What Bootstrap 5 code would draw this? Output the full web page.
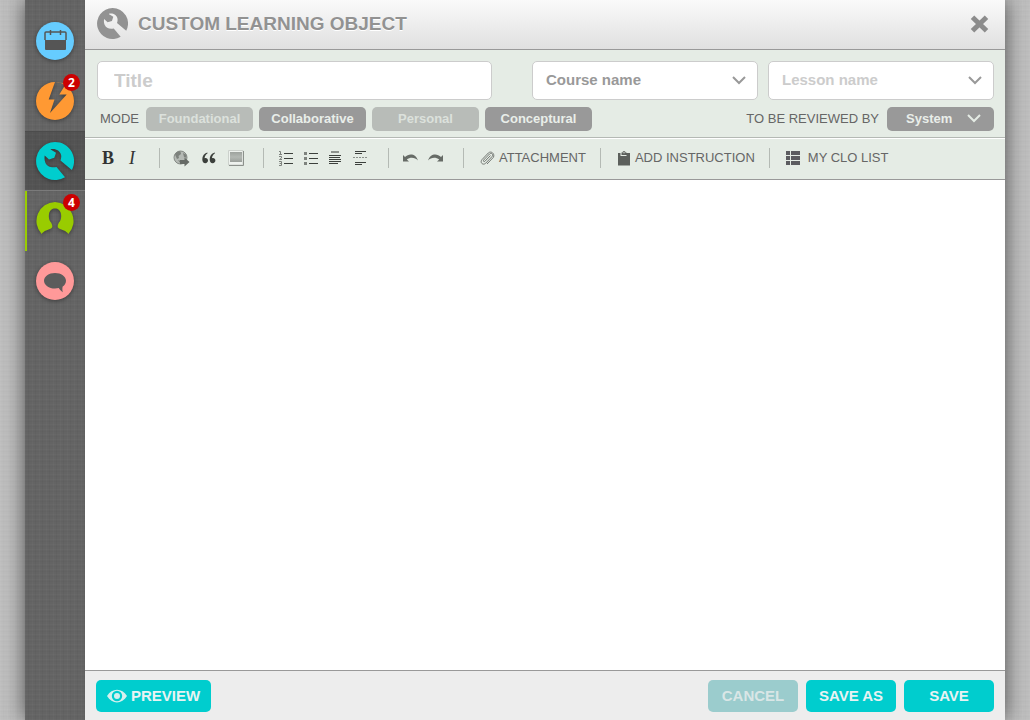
<!DOCTYPE html>
<html lang="en">
<head>
<meta charset="utf-8">
<meta name="viewport" content="width=device-width, initial-scale=1">
<title>Custom Learning Object</title>
<link rel="stylesheet" href="https://cdn.jsdelivr.net/npm/bootstrap@5.3.0/dist/css/bootstrap.min.css">
<style>
  body {
    font-family: "Liberation Sans", Arial, sans-serif;
    font-size: 13px;
    line-height: 16px;
    color: #666;
    background-color: #bebebe;
    background-image:
      repeating-linear-gradient(90deg, rgba(255,255,255,.03) 0 1px, transparent 1px 3px, rgba(0,0,0,.01) 3px 4px, transparent 4px 7px),
      repeating-linear-gradient(0deg, rgba(255,255,255,.03) 0 1px, transparent 1px 3px, rgba(0,0,0,.01) 3px 4px, transparent 4px 5px);
  }
  .shell { margin: 0 25px; box-shadow: 0 0 20px rgba(0,0,0,.6); }

  /* Side rail */
  .rail {
    width: 60px; padding-top: 11px;
    background-color: #646464;
    background-image:
      repeating-linear-gradient(90deg, rgba(255,255,255,.02) 0 1px, transparent 1px 3px, rgba(0,0,0,.03) 3px 4px, transparent 4px 7px),
      repeating-linear-gradient(0deg, rgba(255,255,255,.02) 0 1px, transparent 1px 3px, rgba(0,0,0,.02) 3px 4px, transparent 4px 5px);
  }
  .rail-item { height: 60px; border-left: 2px solid transparent; border-right: 2px solid transparent; }
  .rail-item svg { width: 38px; height: 38px; overflow: visible; filter: drop-shadow(0 1px 2px rgba(0,0,0,.4)); }
  .rail-item.current { background-color: rgba(0,0,0,.16); border: 0; box-shadow: inset 0 1px #4c4c4c, inset 0 -1px #7b7b7b; }
  .rail-item.open { border-left-color: #9c0; }
  .count {
    position: absolute; top: 3px; right: 3px; width: 17px; height: 17px;
    border-radius: 50%; background: #c00; color: #fff;
    font: bold 12px/17px "Open Sans", sans-serif; text-align: center;
  }

  /* Header */
  .top-bar { height: 50px; padding: 0 16px 2px 12px; background: linear-gradient(#fafafa, #e0e0e0); border-bottom: 1px solid #999; }
  .top-bar h1 { margin: 0 0 0 10px; font-size: 19px; line-height: 24px; font-weight: bold; color: #929292; text-shadow: 0 1px #fff; }
  .close-btn { color: #8c8c8c; }

  /* Fields */
  .fields { padding: 11px 11px 6px 12px; background: #e5ece5; border-bottom: 1px solid #b4b9b4; }
  .field { height: 39px; border: 1px solid #ccc; border-radius: 5px; background-color: #fff; font-weight: bold; font-size: 15px; }
  .field-title { width: 44%; padding: 0 16px; font-size: 19px; color: #999; }
  .field-title::placeholder { color: #ccc; opacity: 1; }
  .field-pick { width: 226px; padding: 0 32px 2px 13px; color: #999; }
  .field-pick, .reviewer {
    appearance: none;
    background-repeat: no-repeat; background-position: right 11px top 14px; background-size: 14px 9px;
    background-image: url("data:image/svg+xml,%3Csvg xmlns='http://www.w3.org/2000/svg' viewBox='0 0 14 9'%3E%3Cpath d='M1 1l6 6 6-6' fill='none' stroke='%23999' stroke-width='2'/%3E%3C/svg%3E");
  }
  .field-pick.unset { color: #ccc; }
  .mode-line { margin-top: 7px; }
  .mode-label { width: 49px; padding-left: 3px; }
  .mode-btn, .reviewer {
    width: 107px; height: 24px; padding: 0; border: 0; border-radius: 5px;
    background-color: #999; color: #e9eee9; font-weight: bold; font-size: 13px; line-height: 24px;
  }
  .mode-btn.off { background-color: #b8bcb8; color: #dce1dc; }
  .reviewer {
    padding: 0 30px 0 19px; background-position: right 13px top 7px;
    background-image: url("data:image/svg+xml,%3Csvg xmlns='http://www.w3.org/2000/svg' viewBox='0 0 14 9'%3E%3Cpath d='M1 1l6 6 6-6' fill='none' stroke='%23e5ece5' stroke-width='2'/%3E%3C/svg%3E");
  }
  .pick-group { gap: 10px; }
  .mode-group { gap: 6px; }

  /* Editor tools */
  .tools { padding: 9px 11px 11px; background: #e5ece5; border-top: 1px solid #fff; border-bottom: 1px solid #999; }
  .tool-set { height: 20px; padding: 0 15px 0 9px; }
  .tool-set + .tool-set { border-left: 1px solid #b4bab4; }
  .tool-set.first { padding-left: 0; }
  .tool-set.inserts { gap: 2px; }
  .tool-set.wide { padding-left: 16px; padding-right: 14px; }
  .tool { min-width: 25px; height: 20px; padding: 0; border: 0; background: none; color: #666; }
  .tool svg { flex: none; display: block; margin: 0 auto; }
  .letter { min-width: 24px; font: bold 18px/20px "Liberation Serif", serif; color: #333; }
  .letter.slant { font-weight: normal; font-style: italic; }

  .page-text { min-height: 300px; border: 0; resize: none; padding: 16px; outline: 0; font-size: 15px; line-height: 20px; }

  /* Footer */
  .bottom-bar { height: 50px; padding: 0 11px; background: #ededed; border-top: 1px solid #999; }
  .action { height: 32px; min-width: 90px; padding: 0 11px; border: 0; border-radius: 5px; background: #00cdce; color: #e9f3f3; font-weight: bold; font-size: 15px; }
  .action.muted { background: #9bcccd; color: #d9e6e6; }
</style>
</head>
<body>
<svg class="d-none" aria-hidden="true">
  <symbol id="wrench-disc" viewBox="0 0 38 38">
    <path d="M19 0A19 19 0 1 0 29 35.200L20.500 25C16 26 11 25 9.300 20.500C8.300 18 8.400 15.800 8.700 13.500L13 17.600L18.300 15.800L20 10.800L14.300 7.300C19 5.800 24 8.500 25 12.500C25.600 15 25 17 24.500 18.500L35.800 28A19 19 0 0 0 19 0Z"/>
  </symbol>
</svg>
<div class="shell d-flex min-vh-100">
  <nav class="rail flex-shrink-0" aria-label="Sections">
    <a href="#calendar" aria-label="Calendar" class="rail-item d-flex align-items-center justify-content-center">
      <svg viewBox="0 0 38 38"><circle cx="19" cy="19" r="19" fill="#6cf"/><path d="M9 18h21v9q0 1-1 1H10q-1 0-1-1Z" fill="#555"/><path d="M9 18v-7q0-1 1-1H29q1 0 1 1v7" fill="none" stroke="#555" stroke-width="1.500"/><path d="M14.500 8v5M24.500 8v5" stroke="#555" stroke-width="1.500"/></svg>
    </a>
    <a href="#activity" aria-label="Activity" class="rail-item position-relative d-flex align-items-center justify-content-center">
      <svg viewBox="0 0 38 38"><path fill-rule="evenodd" fill="#f93" d="M19 0a19 19 0 1 0 0 38a19 19 0 0 0 0-38ZM19 0L12.700 17.500H18.500L14 31L30.700 12.500H23.300L29.500 2.500L26.500 1Z"/></svg>
      <span class="count">2</span>
    </a>
    <a href="#tools" aria-label="Tools" aria-current="page" class="rail-item current d-flex align-items-center justify-content-center">
      <svg fill="#00cdce"><use href="#wrench-disc"/></svg>
    </a>
    <a href="#people" aria-label="People" class="rail-item open position-relative d-flex align-items-center justify-content-center">
      <svg viewBox="0 0 38 38"><path fill="#9c0" d="M19 0A19 19 0 0 0 5.600 32C8 28.500 12 28 15 26.500C17 25.500 16.500 23 15 20.500C13 18.500 12.500 15 13 12C13.500 8.500 16 6.500 19 6.500S24.500 8.500 25 12C25.500 15 25 18.500 23 20.500C21.500 23 21 25.500 23 26.500C26 28 30 28.500 32.400 32A19 19 0 0 0 19 0Z"/></svg>
      <span class="count">4</span>
    </a>
    <a href="#messages" aria-label="Messages" class="rail-item d-flex align-items-center justify-content-center">
      <svg viewBox="0 0 38 38"><circle cx="19" cy="19" r="19" fill="#f99"/><path fill="#5c5c5c" d="M19 11C12.900 11 8 14.500 8 18.800s4.900 7.800 11 7.800c1.300 0 2.600-.2 3.800-.5c1 1.700 2.200 3 4 4.200c-.5-2-.6-4-.1-5.700C28.700 23.200 30 21.100 30 18.800C30 14.500 25.100 11 19 11Z"/></svg>
    </a>
  </nav>

  <main class="flex-grow-1 d-flex flex-column bg-white">
    <header class="top-bar d-flex align-items-center">
      <svg width="31" height="31" fill="#929292" aria-hidden="true"><use href="#wrench-disc"/></svg>
      <h1>CUSTOM LEARNING OBJECT</h1>
      <button type="button" class="close-btn ms-auto border-0 bg-transparent p-0 d-flex" aria-label="Close">
        <svg width="19" height="18" viewBox="0 0 19 18"><path d="M2.500 2.200L16.500 15.800M16.500 2.200L2.500 15.800" stroke="currentColor" stroke-width="5"/></svg>
      </button>
    </header>

    <section class="fields">
      <div class="d-flex justify-content-between">
        <input type="text" class="field field-title" placeholder="Title" aria-label="Title">
        <div class="pick-group d-flex">
          <select class="field field-pick" aria-label="Course name"><option>Course name</option></select>
          <select class="field field-pick unset" aria-label="Lesson name"><option>Lesson name</option></select>
        </div>
      </div>
      <div class="d-flex align-items-center mode-line">
        <span id="mode-label" class="mode-label">MODE</span>
        <div class="mode-group d-flex" role="group" aria-labelledby="mode-label">
          <button type="button" class="mode-btn off" aria-pressed="false">Foundational</button>
          <button type="button" class="mode-btn" aria-pressed="true">Collaborative</button>
          <button type="button" class="mode-btn off" aria-pressed="false">Personal</button>
          <button type="button" class="mode-btn" aria-pressed="true">Conceptural</button>
        </div>
        <label for="reviewer" class="ms-auto me-2">TO BE REVIEWED BY</label>
        <select id="reviewer" class="reviewer"><option>System</option></select>
      </div>
    </section>

    <div class="tools d-flex flex-wrap" role="toolbar" aria-label="Formatting">
      <div class="tool-set first d-flex">
        <button type="button" class="tool letter" aria-label="Bold">B</button>
        <button type="button" class="tool letter slant" aria-label="Italic">I</button>
      </div>
      <div class="tool-set inserts d-flex">
        <button type="button" class="tool" aria-label="Link"><svg width="17" height="17" viewBox="0 0 17 17"><circle cx="7.500" cy="7.500" r="6.500" fill="#b5bab5" stroke="#858a85"/><path d="M2 4.500C4 1.500 6 1 7.500 1.500L8 4L5.500 6L6 8L4 9ZM10 3L13 4.500L13.500 8L11 7ZM5 10L8 11L7.500 13.500Z" fill="#7d827d"/><path d="M7 10h4.500V7.500L16.500 12l-5 4.500V14H7Z" fill="#666b66"/></svg></button>
        <button type="button" class="tool" aria-label="Quote"><svg width="14" height="12" viewBox="0 0 14 12"><path fill="#3c403c" d="M5.300 .5C2 1.500 .3 4 .3 7.200C.3 9.800 1.500 11.200 3.300 11.200C4.900 11.200 6 10.100 6 8.600C6 7.100 5 6.100 3.600 6.100C3.200 6.100 2.900 6.100 2.600 6.300C2.700 4 3.700 2.400 5.600 1.200ZM12.700 .5C9.400 1.500 7.700 4 7.700 7.200C7.700 9.800 8.900 11.200 10.700 11.200C12.300 11.200 13.400 10.100 13.400 8.600C13.400 7.100 12.400 6.100 11 6.100C10.600 6.100 10.300 6.100 10 6.300C10.100 4 11.100 2.400 13 1.200Z"/></svg></button>
        <button type="button" class="tool" aria-label="Image"><svg width="16" height="16" viewBox="0 0 16 16"><defs><linearGradient id="pic" x2="0" y2="1"><stop stop-color="#9da29d"/><stop offset=".5" stop-color="#b3b8b3"/><stop offset="1" stop-color="#9a9f9a"/></linearGradient></defs><path d="M.5 .5h14.500v14.500H.5Z" fill="#eef2ee" stroke="#ccd1cc"/><path d="M15.500 1v14.500H1" fill="none" stroke="#8c918c"/><path d="M2 2h12v10H2Z" fill="url(#pic)"/></svg></button>
      </div>
      <div class="tool-set d-flex">
        <button type="button" class="tool" aria-label="Numbered list"><svg width="14" height="16" viewBox="0 0 14 16"><path d="M5 3.500h9M5 8.500h9M5 13.500h9" stroke="#3c403c"/><path d="M0 1.500h1.500v3M0 4.500h3M0 6.500h2.500v1.500L.5 9.500h2.500M0 11.500h2.500v4H0M.5 13.500h2" fill="none" stroke="#7e837e"/></svg></button>
        <button type="button" class="tool" aria-label="Bulleted list"><svg width="14" height="14" viewBox="0 0 14 14"><path d="M5 2.500h9M5 7.500h9M5 12.500h9" stroke="#3c403c"/><path d="M0 1h3v3H0ZM0 6h3v3H0ZM0 11h3v3H0Z" fill="#7e837e"/></svg></button>
        <button type="button" class="tool" aria-label="Center"><svg width="13" height="14" viewBox="0 0 13 14"><path d="M2 0h8v2H2Z" fill="#8c918c"/><path d="M0 4.500h12M0 6.500h11M0 8.500h12M0 10.500h12M0 12.500h9" stroke="#3c403c"/></svg></button>
        <button type="button" class="tool" aria-label="Page break"><svg width="15" height="14" viewBox="0 0 15 14"><path d="M2 .5h11M2 2.500h7M2 11.500h11M2 13.500h7" stroke="#3c403c"/><path d="M0 6.500h15" stroke="#8c918c" stroke-dasharray="2 1"/></svg></button>
      </div>
      <div class="tool-set d-flex">
        <button type="button" class="tool" aria-label="Undo"><svg width="15" height="9" viewBox="0 0 15 9"><path id="turn" fill="#666b66" d="M0 1V7.500H6L3.800 5.500C7 2.800 12 3 15 6.500C13 -.5 6 -1.200 2 3Z"/></svg></button>
        <button type="button" class="tool" aria-label="Redo"><svg width="15" height="9" viewBox="0 0 15 9"><use href="#turn" transform="matrix(-1 0 0 1 15 0)"/></svg></button>
      </div>
      <div class="tool-set wide d-flex">
        <button type="button" class="tool d-flex align-items-center gap-1"><svg width="15" height="15" viewBox="0 0 15 15"><path d="M10.500 4.500L5 10.200C4 11.200 2.800 10 3.700 9L9.500 3C11.500 1.200 13.800 3.600 12 5.600L5.700 12.200C3 14.800 -.5 11.500 2 8.600L8.300 2C11-.5 15 2.500 13.500 6.200L7 13" fill="none" stroke="#737873"/></svg><span>ATTACHMENT</span></button>
      </div>
      <div class="tool-set wide d-flex">
        <button type="button" class="tool d-flex align-items-center gap-1"><svg width="14" height="16" viewBox="0 0 14 16"><path fill-rule="evenodd" fill="#5c605c" d="M1 3h2.500v3h6V3H13v12.500H1ZM4.500 5V2.500h1A1.500 1.500 0 0 1 8.500 2.500h1V5ZM6.300 2.300h1.400v1H6.300Z"/></svg><span>ADD INSTRUCTION</span></button>
      </div>
      <div class="tool-set wide d-flex">
        <button type="button" class="tool d-flex align-items-center gap-2"><svg width="14" height="14" viewBox="0 0 14 14"><path fill="#5c5c60" d="M0 0h4v4H0ZM5 0h9v4H5ZM0 5h4v4H0ZM5 5h9v4H5ZM0 10h4v4H0ZM5 10h9v4H5Z"/></svg><span>MY CLO LIST</span></button>
      </div>
    </div>

    <textarea class="page-text flex-grow-1 w-100" aria-label="Content"></textarea>

    <footer class="bottom-bar d-flex align-items-center gap-2">
      <button type="button" class="action me-auto d-flex align-items-center gap-1"><svg width="20" height="14" viewBox="0 0 20 14"><path fill-rule="evenodd" fill="#d5f0ee" d="M0 7C5-1.500 15-1.500 20 7C15 15.500 5 15.500 0 7ZM10 1.800a5.200 5.200 0 1 0 0 10.400a5.200 5.200 0 0 0 0-10.400Z"/><circle cx="10" cy="7" r="3" fill="#d5f0ee"/></svg><span>PREVIEW</span></button>
      <button type="button" class="action muted">CANCEL</button>
      <button type="button" class="action">SAVE AS</button>
      <button type="button" class="action">SAVE</button>
    </footer>
  </main>
</div>
<script src="https://cdn.jsdelivr.net/npm/bootstrap@5.3.0/dist/js/bootstrap.bundle.min.js"></script>
</body>
</html>
